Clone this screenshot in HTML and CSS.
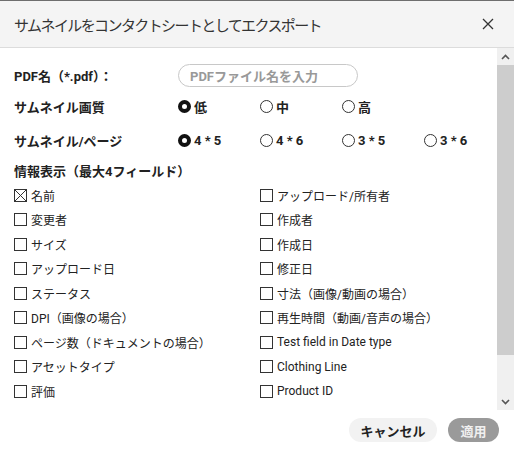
FILE: index.html
```html
<!DOCTYPE html>
<html lang="ja">
<head>
<meta charset="utf-8">
<link rel="stylesheet" href="styles.css">
</head>
<body>
<div class="dialog">
  <div class="header">
    <span class="title">サムネイルをコンタクトシートとしてエクスポート</span>
    <svg class="close" width="12" height="12" viewBox="0 0 12 12"><path d="M1 1L11 11M11 1L1 11" stroke="#333" stroke-width="1.3" fill="none"/></svg>
  </div>
  <div class="body">
    <div class="content">
      <div class="row r1">
        <span class="label">PDF名（*.pdf）：</span>
        <div class="input">PDFファイル名を入力</div>
      </div>
      <div class="row r2">
        <span class="label">サムネイル画質</span>
        <div class="radios">
          <span class="radio"><i class="dot on"></i>低</span>
          <span class="radio"><i class="dot"></i>中</span>
          <span class="radio"><i class="dot"></i>高</span>
        </div>
      </div>
      <div class="row r3">
        <span class="label">サムネイル/ページ</span>
        <div class="radios">
          <span class="radio"><i class="dot on"></i>4 * 5</span>
          <span class="radio"><i class="dot"></i>4 * 6</span>
          <span class="radio"><i class="dot"></i>3 * 5</span>
          <span class="radio"><i class="dot"></i>3 * 6</span>
        </div>
      </div>
      <div class="section">情報表示（最大4フィールド）</div>
      <div class="checks">
        <span class="check"><i class="box x"></i>名前</span>
        <span class="check"><i class="box"></i>アップロード/所有者</span>
        <span class="check"><i class="box"></i>変更者</span>
        <span class="check"><i class="box"></i>作成者</span>
        <span class="check"><i class="box"></i>サイズ</span>
        <span class="check"><i class="box"></i>作成日</span>
        <span class="check"><i class="box"></i>アップロード日</span>
        <span class="check"><i class="box"></i>修正日</span>
        <span class="check"><i class="box"></i>ステータス</span>
        <span class="check"><i class="box"></i>寸法（画像/動画の場合）</span>
        <span class="check"><i class="box"></i>DPI（画像の場合）</span>
        <span class="check"><i class="box"></i>再生時間（動画/音声の場合）</span>
        <span class="check"><i class="box"></i>ページ数（ドキュメントの場合）</span>
        <span class="check"><i class="box"></i>Test field in Date type</span>
        <span class="check"><i class="box"></i>アセットタイプ</span>
        <span class="check"><i class="box"></i>Clothing Line</span>
        <span class="check"><i class="box"></i>評価</span>
        <span class="check"><i class="box"></i>Product ID</span>
      </div>
    </div>
    <div class="scrollbar">
      <div class="sb-btn"><svg width="9" height="6" viewBox="0 0 9 6"><path d="M1 5L4.5 1.5L8 5" stroke="#555" stroke-width="1.6" fill="none"/></svg></div>
      <div class="sb-thumb"></div>
      <div class="sb-track"></div>
      <div class="sb-btn"><svg width="9" height="6" viewBox="0 0 9 6"><path d="M1 1L4.5 4.5L8 1" stroke="#555" stroke-width="1.6" fill="none"/></svg></div>
    </div>
  </div>
  <div class="footer">
    <button class="btn cancel">キャンセル</button>
    <button class="btn apply">適用</button>
  </div>
</div>
</body>
</html>
```
FILE: styles.css
```css
html, body {
  margin: 0;
  padding: 0;
  background: #fff;
}
body {
  font-family: Roboto, "Noto Sans CJK JP", sans-serif;
  color: #222;
  font-size: 13px;
}
.dialog {
  width: 514px;
  height: 453px;
  box-sizing: border-box;
  border-top: 1px solid #6e6e6e;
  display: flex;
  flex-direction: column;
  overflow: hidden;
}
.header {
  height: 46px;
  flex: none;
  background: #f4f4f4;
  border-bottom: 1px solid #dcdcdc;
  display: flex;
  align-items: center;
  justify-content: space-between;
  padding: 0 20px 0 14px;
}
.title {
  font-size: 15px;
  letter-spacing: -1.6px;
  color: #333;
  font-family: "Noto Sans CJK JP", sans-serif;
}
.close {
  display: block;
}
.body {
  height: 362px;
  flex: none;
  display: flex;
}
.content {
  flex: 1;
  padding: 12px 0 0 14px;
  overflow: hidden;
}
.row {
  display: flex;
  align-items: center;
}
.r1 { height: 31px; }
.r2 { height: 31px; }
.r3 { height: 36px; }
.label {
  width: 164px;
  flex: none;
  font-weight: bold;
  font-size: 13px;
  color: #222;
}
.input {
  width: 167px;
  height: 21px;
  border: 1px solid #c8c8c8;
  border-radius: 12px;
  padding-left: 11px;
  display: flex;
  align-items: center;
  color: #999;
  font-weight: bold;
  font-size: 13px;
}
.radios {
  display: grid;
  grid-template-columns: repeat(4, 82px);
}
.radio {
  display: flex;
  align-items: center;
  font-weight: bold;
  font-size: 13px;
  color: #222;
}
.dot {
  width: 11px;
  height: 11px;
  border: 1px solid #333;
  border-radius: 50%;
  margin-right: 3px;
  box-sizing: content-box;
}
.dot.on {
  width: 5px;
  height: 5px;
  border: 4px solid #111;
}
.section {
  height: 25px;
  display: flex;
  align-items: center;
  font-weight: bold;
  font-size: 13px;
  color: #222;
}
.checks {
  display: grid;
  grid-template-columns: 246px 1fr;
  grid-auto-rows: 24.5px;
}
.check {
  display: flex;
  align-items: center;
  font-size: 12px;
  color: #222;
}
.box {
  width: 11px;
  height: 11px;
  border: 1px solid #333;
  margin-right: 4px;
  flex: none;
}
.box.x {
  background:
    linear-gradient(45deg, transparent calc(50% - 0.6px), #333 calc(50% - 0.6px), #333 calc(50% + 0.6px), transparent calc(50% + 0.6px)),
    linear-gradient(-45deg, transparent calc(50% - 0.6px), #333 calc(50% - 0.6px), #333 calc(50% + 0.6px), transparent calc(50% + 0.6px));
}
.scrollbar {
  width: 17px;
  flex: none;
  display: flex;
  flex-direction: column;
  background: #f0f0f0;
}
.sb-btn {
  height: 17px;
  display: flex;
  align-items: center;
  justify-content: center;
  flex: none;
}
.sb-thumb {
  height: 290px;
  background: #cdcdcd;
  flex: none;
}
.sb-track {
  flex: 1;
}
.footer {
  flex: 1;
  display: flex;
  justify-content: flex-end;
  align-items: flex-start;
  padding: 8px 15px 0 0;
  gap: 11px;
}
.btn {
  height: 24px;
  border: none;
  border-radius: 12px;
  font-family: "Noto Sans CJK JP", sans-serif;
  font-weight: bold;
  font-size: 13px;
  padding: 0;
  display: flex;
  align-items: center;
  justify-content: center;
}
.cancel {
  width: 88px;
  background: #f2f2f2;
  color: #222;
}
.apply {
  width: 51px;
  background: #9a9a9a;
  color: #f0f0f0;
}
```
